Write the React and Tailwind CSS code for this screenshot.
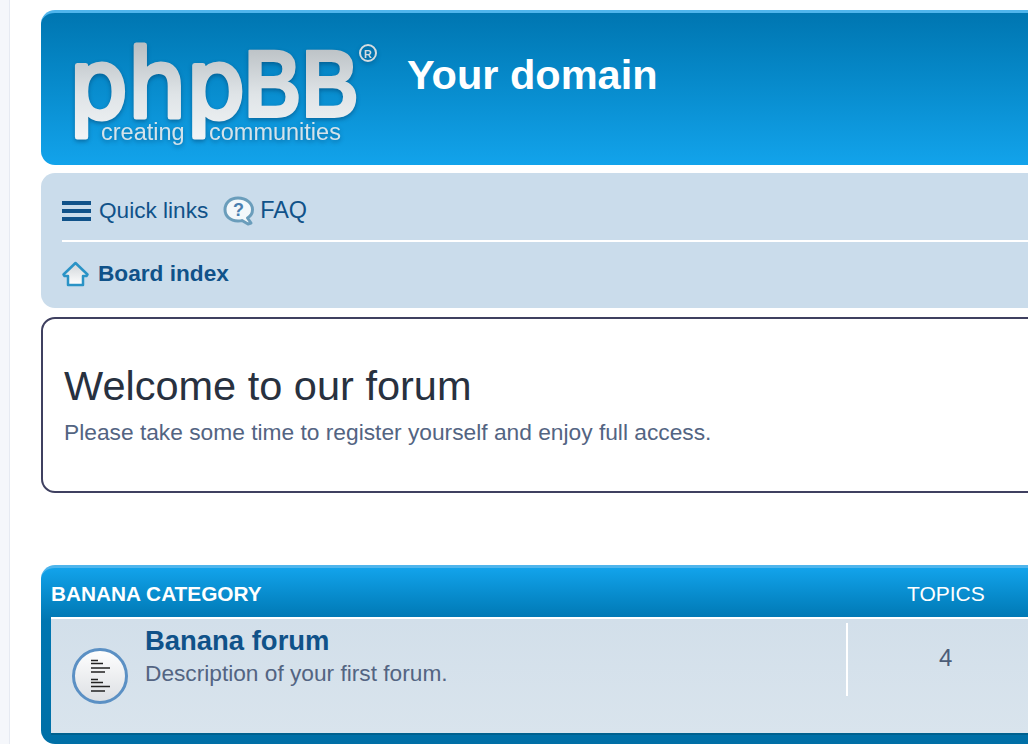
const font = { fontFamily: '"Liberation Sans", Arial, sans-serif' };

const Logo = () => (
    <svg width="312" height="112" viewBox="0 0 312 112" className="shrink-0 drop-shadow-[0_2px_2px_rgba(0,50,90,0.45)]">
        <defs>
            <linearGradient id="logoFill" gradientUnits="userSpaceOnUse" x1="0" y1="4" x2="0" y2="96">
                <stop offset="0" stopColor="#b9bfc3" />
                <stop offset="0.55" stopColor="#dfe4e7" />
                <stop offset="1" stopColor="#f0f3f5" />
            </linearGradient>
        </defs>
        <text x="-3" y="77" fontFamily="'DejaVu Sans', sans-serif" fontSize="94" fill="url(#logoFill)" stroke="url(#logoFill)" strokeWidth="5" strokeLinejoin="round" textLength="176" lengthAdjust="spacingAndGlyphs">php</text>
        <text x="172" y="77" fontFamily="'Liberation Sans', sans-serif" fontWeight="700" fontSize="96" fill="url(#logoFill)" stroke="url(#logoFill)" strokeWidth="2" strokeLinejoin="round" textLength="115" lengthAdjust="spacingAndGlyphs">BB</text>
        <circle cx="296" cy="13" r="8" fill="none" stroke="#d4dce0" strokeWidth="2" />
        <text x="296" y="17.500" textAnchor="middle" fontFamily="'Liberation Sans', sans-serif" fontWeight="700" fontSize="11" fill="#d4dce0">R</text>
        <text x="29" y="100" fontFamily="'Liberation Sans', sans-serif" fontSize="23.500" fill="#d5e3ea">creating</text>
        <text x="137" y="100" fontFamily="'Liberation Sans', sans-serif" fontSize="23.500" fill="#d5e3ea">communities</text>
    </svg>
);

const FaqIcon = () => (
    <svg width="32" height="30" viewBox="0 0 32 30">
        <path d="M15 2C7 2 2 7 2 13.500S7 25 15 25c2 0 3 0 4-.5l6 3.500 3-1-3.500-5C28 20 29.500 17 29.500 13.500 29.500 7 23 2 15 2z" fill="#f4f8fb" stroke="#6a9dbb" strokeWidth="3" strokeLinejoin="round" />
        <text x="15.500" y="20" textAnchor="middle" fontFamily="'Liberation Sans', sans-serif" fontWeight="700" fontSize="18" fill="#4a7fb0">?</text>
    </svg>
);

const HomeIcon = () => (
    <svg width="27" height="26" viewBox="0 0 27 26">
        <defs>
            <linearGradient id="homeFill" x1="0" y1="0" x2="0" y2="1">
                <stop offset="0" stopColor="#cfd4d8" />
                <stop offset="1" stopColor="#ffffff" />
            </linearGradient>
        </defs>
        <path d="M13.500 2 1.500 13.500 2.500 15H6v9h15v-9h3.500l1-1.500z" fill="url(#homeFill)" stroke="#2a93c6" strokeWidth="2.500" strokeLinejoin="round" />
    </svg>
);

const ForumIcon = () => (
    <svg width="56" height="56" viewBox="0 0 56 56">
        <defs>
            <linearGradient id="forumFill" x1="0" y1="0" x2="0" y2="1">
                <stop offset="0" stopColor="#ffffff" />
                <stop offset="1" stopColor="#dcdfe3" />
            </linearGradient>
        </defs>
        <circle cx="28" cy="28" r="26.500" fill="url(#forumFill)" stroke="#5b90c4" strokeWidth="3" />
        <g stroke="#222" strokeWidth="1.500">
            <path d="M19 12.500h7M19 15.500h12M19 20h19M19 24h14" />
            <path d="M19 31.500h7M19 34.500h12M19 38.500h19M19 43h14" />
        </g>
    </svg>
);

const App = () => {
    return (
        <div className="flex h-[744px] w-[1028px] overflow-hidden bg-white" style={font}>
            <div className="w-[10px] shrink-0 border-r border-[#e6eaf2] bg-[#f5f7fb]" />
            <div className="flex w-[1100px] shrink-0 flex-col pl-[31px] pt-[10px]">
                <div className="flex h-[155px] shrink-0 items-start rounded-[14px] border-t-[3px] border-[#4fb5ec] bg-gradient-to-b from-[#0076b1] to-[#12a3eb] pl-[31px] pt-[27px]">
                    <Logo />
                    <div className="ml-[23px] pt-[12px] text-[41.500px] font-bold leading-[46px] text-white">Your domain</div>
                </div>

                <div className="mt-[8px] h-[135px] shrink-0 rounded-[14px] bg-[#cadceb] pl-[21px]">
                    <div className="flex h-[69px] items-center border-b-2 border-white pt-[9px] text-[22.600px] text-[#105289]">
                        <div className="flex w-[29px] flex-col gap-[4px]">
                            <span className="h-[4px] bg-[#105289]" />
                            <span className="h-[4px] bg-[#105289]" />
                            <span className="h-[4px] bg-[#105289]" />
                        </div>
                        <span className="ml-[8px]">Quick links</span>
                        <span className="ml-[15px] flex"><FaqIcon /></span>
                        <span className="ml-[5px] text-[23.400px]">FAQ</span>
                    </div>
                    <div className="flex h-[64px] items-center text-[22.650px] font-bold text-[#105289]">
                        <HomeIcon />
                        <span className="ml-[9px]">Board index</span>
                    </div>
                </div>

                <div className="mt-[9px] flex h-[176px] shrink-0 flex-col justify-center rounded-[14px] border-2 border-[#3f4060] pb-[2px] pl-[21px]">
                    <h2 className="text-[41.500px] leading-[46px] text-[#28313f]">Welcome to our forum</h2>
                    <p className="mt-[10px] text-[22.750px] leading-[26px] text-[#536482]">Please take some time to register yourself and enjoy full access.</p>
                </div>

                <div className="mt-[72px] h-[179px] shrink-0 rounded-[14px] border-t-[3px] border-[#4fb5ec] bg-gradient-to-b from-[#12a3eb] via-[#0076b1] via-30% to-[#006fa6] pl-[10px] pr-[10px]">
                    <div className="flex h-[49px] items-center pt-[3px] text-[20.800px] text-white">
                        <span className="w-[795px] font-bold">BANANA CATEGORY</span>
                        <span className="w-[200px] pl-[61px] text-[21px]">TOPICS</span>
                    </div>
                    <div className="flex h-[118px] border-t-2 border-b-2 border-t-white border-b-[#00618f] bg-gradient-to-b from-[#d2dfea] to-[#d9e4ed]">
                        <div className="flex w-[795px] items-start">
                            <div className="ml-[21px] mt-[29px] flex shrink-0"><ForumIcon /></div>
                            <div className="ml-[17px] mt-[6px]">
                                <div className="text-[27.450px] font-bold leading-[31px] text-[#105289]">Banana forum</div>
                                <div className="mt-[4px] text-[22.700px] leading-[26px] text-[#536482]">Description of your first forum.</div>
                            </div>
                        </div>
                        <div className="mt-[4px] h-[73px] w-[2px] bg-white" />
                        <div className="w-[196px] pt-[25px] pl-[91px] text-[24px] leading-[28px] text-[#4c5d77]">4</div>
                    </div>
                </div>
            </div>
        </div>
    );
};

export default App;
